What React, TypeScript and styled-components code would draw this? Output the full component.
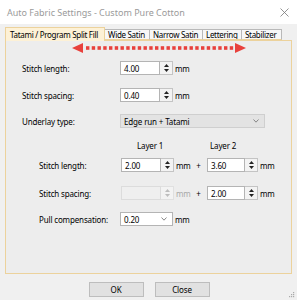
import React from "react";
import styled, { createGlobalStyle } from "styled-components";

const Global = createGlobalStyle`
  html, body { margin: 0; padding: 0; background: #f0f0f0; }
  #root { width: 297px; height: 300px; }
`;

const Window = styled.div`
  position: relative;
  width: 297px;
  height: 300px;
  box-sizing: border-box;
  display: flex;
  flex-direction: column;
  background: #f0f0f0;
  font-family: "Noto Sans", "Open Sans", sans-serif;
  font-size: 8px;
  letter-spacing: -0.15px;
  color: #000;
  overflow: hidden;
`;

const TitleBar = styled.div`
  height: 24px;
  flex: none;
  display: flex;
  align-items: center;
  justify-content: space-between;
  padding: 0 8px 0 7px;
  background: #ffffff;
  color: #9a9a9a;
  font-size: 9px;
  letter-spacing: 0;
`;

const TabStrip = styled.div`
  display: flex;
  align-items: flex-end;
  height: 13px;
  margin-top: 3px;
  padding-left: 5px;
  position: relative;
  z-index: 1;
`;

const Tab = styled.div<{ $w: number; $active?: boolean }>`
  box-sizing: border-box;
  width: ${(p) => p.$w}px;
  height: ${(p) => (p.$active ? 14 : 11)}px;
  margin-bottom: ${(p) => (p.$active ? -1 : 0)}px;
  display: flex;
  align-items: center;
  padding-left: ${(p) => (p.$active ? 4 : 3)}px;
  white-space: nowrap;
  overflow: hidden;
  letter-spacing: -0.3px;
  background: ${(p) => (p.$active ? "#fdf1d6" : "#f7f7f7")};
  border: 1px solid ${(p) => (p.$active ? "#ecd29c" : "#b9b9b9")};
  border-bottom: ${(p) => (p.$active ? "none" : "1px solid #ecd29c")};
  border-left: ${(p) => (p.$active ? "1px solid #ecd29c" : "none")};
`;

const Panel = styled.div`
  box-sizing: border-box;
  height: 234px;
  margin: 0 5px;
  border: 1px solid #ecd29c;
  background: #ededed;
  display: flex;
  flex-direction: column;
`;

const Row = styled.div<{ $mt: number; $pl: number; $h?: number }>`
  display: flex;
  align-items: center;
  height: ${(p) => p.$h ?? 14}px;
  margin-top: ${(p) => p.$mt}px;
  padding-left: ${(p) => p.$pl}px;
`;

const Label = styled.div<{ $w: number }>`
  width: ${(p) => p.$w}px;
  flex: none;
  white-space: nowrap;
`;

const TextBox = styled.div<{ $w: number; $disabled?: boolean }>`
  box-sizing: border-box;
  width: ${(p) => p.$w}px;
  height: 14px;
  display: flex;
  align-items: center;
  padding-left: 3px;
  background: ${(p) => (p.$disabled ? "#efefef" : "#ffffff")};
  border: 1px solid ${(p) => (p.$disabled ? "#dcdcdc" : "#b4b4b4")};
`;

const Spinner = styled.div<{ $disabled?: boolean }>`
  box-sizing: border-box;
  width: 13px;
  height: 14px;
  display: flex;
  flex-direction: column;
  align-items: center;
  justify-content: center;
  gap: 2px;
  background: #f3f3f3;
  border: 1px solid ${(p) => (p.$disabled ? "#e0e0e0" : "#c4c4c4")};
  border-left: none;
  color: ${(p) => (p.$disabled ? "#bdbdbd" : "#222")};
`;

const Unit = styled.div<{ $disabled?: boolean }>`
  width: 14px;
  margin-left: 2px;
  flex: none;
  color: ${(p) => (p.$disabled ? "#a8a8a8" : "#000")};
`;

const Plus = styled.div`
  width: 17px;
  text-align: center;
  flex: none;
`;

const Select = styled.div<{ $w: number; $flat?: boolean }>`
  box-sizing: border-box;
  width: ${(p) => p.$w}px;
  height: 14px;
  display: flex;
  align-items: center;
  justify-content: space-between;
  padding: 0 5px 0 3px;
  background: ${(p) => (p.$flat ? "#e3e3e3" : "#ffffff")};
  border: 1px solid ${(p) => (p.$flat ? "#cfcfcf" : "#b4b4b4")};
`;

const Footer = styled.div`
  display: flex;
  justify-content: center;
  gap: 11px;
  padding-top: 8px;
  padding-left: 1px;
`;

const Button = styled.div`
  box-sizing: border-box;
  width: 55px;
  height: 15px;
  display: flex;
  align-items: center;
  justify-content: center;
  background: #e1e1e1;
  border: 1px solid #bdbdbd;
`;

const Grip = styled.svg`
  position: absolute;
  right: 2px;
  bottom: 2px;
`;

const Tri = ({ up }: { up?: boolean }) => (
  <svg width="5" height="3" viewBox="0 0 5 3">
    <polygon points={up ? "2.5,0 5,3 0,3" : "0,0 5,0 2.5,3"} fill="currentColor" />
  </svg>
);

const Chevron = () => (
  <svg width="6" height="4" viewBox="0 0 6 4">
    <polyline points="0.5,0.5 3,3.2 5.5,0.5" fill="none" stroke="#7a7a7a" strokeWidth="0.9" />
  </svg>
);

const Spin = ({ value, w = 40, disabled }: { value: string; w?: number; disabled?: boolean }) => (
  <>
    <TextBox $w={w} $disabled={disabled}>{value}</TextBox>
    <Spinner $disabled={disabled}>
      <Tri up />
      <Tri />
    </Spinner>
  </>
);

const Arrow = () => {
  const dots = [];
  for (let x = 14; x < 158; x += 5.75) {
    dots.push(<rect key={x} x={x} y={4.2} width={3.4} height={3.6} fill="#e8413c" />);
  }
  return (
    <svg width="175" height="12" viewBox="0 0 175 12">
      <polygon points="0,6 11,1 11,11" fill="#e8413c" />
      {dots}
      <polygon points="163,1 174,6 163,11" fill="#e8413c" />
    </svg>
  );
};

export default function App() {
  return (
    <Window>
      <Global />
      <TitleBar>
        <span>Auto Fabric Settings - Custom Pure Cotton</span>
        <svg width="9" height="9" viewBox="0 0 9 9">
          <path d="M0.5 0.5 L8.5 8.5 M8.5 0.5 L0.5 8.5" stroke="#777" strokeWidth="0.8" />
        </svg>
      </TitleBar>
      <TabStrip>
        <Tab $w={100} $active>Tatami / Program Split Fill</Tab>
        <Tab $w={45}>Wide Satin</Tab>
        <Tab $w={53}>Narrow Satin</Tab>
        <Tab $w={39}>Lettering</Tab>
        <Tab $w={40}>Stabilizer</Tab>
      </TabStrip>
      <Panel>
        <Row $mt={1} $pl={66} $h={12}>
          <Arrow />
        </Row>
        <Row $mt={7} $pl={16}>
          <Label $w={98}>Stitch length:</Label>
          <Spin value="4.00" />
          <Unit>mm</Unit>
        </Row>
        <Row $mt={13} $pl={16}>
          <Label $w={98}>Stitch spacing:</Label>
          <Spin value="0.40" />
          <Unit>mm</Unit>
        </Row>
        <Row $mt={12} $pl={16}>
          <Label $w={98}>Underlay type:</Label>
          <Select $w={145} $flat>
            <span>Edge run + Tatami</span>
            <Chevron />
          </Select>
        </Row>
        <Row $mt={11} $pl={131} $h={12}>
          <Label $w={73}>Layer 1</Label>
          <Label $w={40}>Layer 2</Label>
        </Row>
        <Row $mt={7} $pl={33}>
          <Label $w={82}>Stitch length:</Label>
          <Spin value="2.00" />
          <Unit>mm</Unit>
          <Plus>+</Plus>
          <Spin value="3.60" w={38} />
          <Unit>mm</Unit>
        </Row>
        <Row $mt={14} $pl={33}>
          <Label $w={82}>Stitch spacing:</Label>
          <Spin value="" disabled />
          <Unit $disabled>mm</Unit>
          <Plus>+</Plus>
          <Spin value="2.00" w={38} />
          <Unit>mm</Unit>
        </Row>
        <Row $mt={12} $pl={33}>
          <Label $w={81}>Pull compensation:</Label>
          <Select $w={53}>
            <span>0.20</span>
            <Chevron />
          </Select>
          <Unit>mm</Unit>
        </Row>
      </Panel>
      <Footer>
        <Button>OK</Button>
        <Button>Close</Button>
      </Footer>
      <Grip width="6" height="6" viewBox="0 0 6 6">
        <rect x="4" y="0" width="1.2" height="1.2" fill="#aaa" />
        <rect x="2" y="2" width="1.2" height="1.2" fill="#aaa" />
        <rect x="4" y="2" width="1.2" height="1.2" fill="#aaa" />
        <rect x="0" y="4" width="1.2" height="1.2" fill="#aaa" />
        <rect x="2" y="4" width="1.2" height="1.2" fill="#aaa" />
        <rect x="4" y="4" width="1.2" height="1.2" fill="#aaa" />
      </Grip>
    </Window>
  );
}
